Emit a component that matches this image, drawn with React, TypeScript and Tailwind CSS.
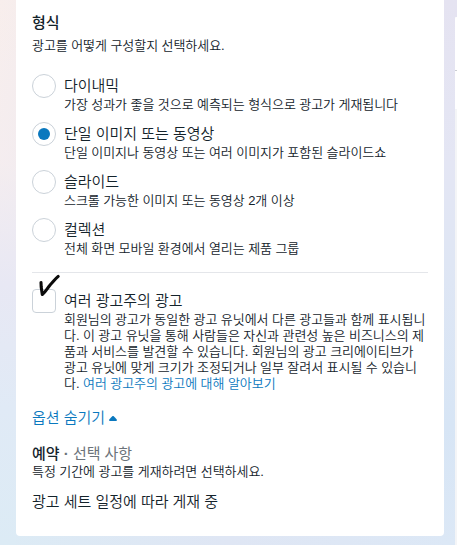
import type { ReactNode } from 'react';

const small = 'text-[13px] leading-4 tracking-[-0.05px] [word-spacing:-0.08px]';
const large = 'text-[15px] leading-5 tracking-[-0.05px] [word-spacing:0.1px]';

function Line({ children }: { children: ReactNode }) {
  return <span className="block whitespace-nowrap">{children}</span>;
}

interface Format {
  title: string;
  detail: string;
  selected?: boolean;
}

const formats: Format[] = [
  { title: '다이내믹', detail: '가장 성과가 좋을 것으로 예측되는 형식으로 광고가 게재됩니다' },
  { title: '단일 이미지 또는 동영상', detail: '단일 이미지나 동영상 또는 여러 이미지가 포함된 슬라이드쇼', selected: true },
  { title: '슬라이드', detail: '스크롤 가능한 이미지 또는 동영상 2개 이상' },
  { title: '컬렉션', detail: '전체 화면 모바일 환경에서 열리는 제품 그룹' },
];

function FormatOption({ title, detail, selected }: Format) {
  return (
    <label className="flex h-12 gap-2">
      <span className="flex size-6 shrink-0 items-center justify-center rounded-full border border-[#cbd2d9] bg-white">
        {selected && <span className="size-3 rounded-full bg-[#0a78be]" />}
      </span>
      <span className="block pt-0.5">
        <span className={`block whitespace-nowrap ${large}`}>{title}</span>
        <span className={`block whitespace-nowrap pt-px ${small}`}>{detail}</span>
      </span>
    </label>
  );
}

export default function App() {
  return (
    <div className="flex h-[545px] w-[457px] overflow-hidden bg-[linear-gradient(90deg,#dcebf5_0%,#dfe6f4_50%,#dce8f6_100%)] font-['Liberation_Sans','Noto_Sans_CJK_KR',sans-serif] font-[350] text-[#14232b]">
      <div className="w-4 shrink-0 bg-[linear-gradient(100deg,#f8eeec_0%,#efeaf1_100%)]">
        <div className="h-full bg-[linear-gradient(180deg,transparent_0%,#f3edf180_30%,#e8e8f4_52%,#e0eaf6_75%,#dcebf5_100%)]" />
      </div>
      <main className="h-[536px] w-[428px] shrink-0 rounded-b-[4px] bg-white px-4 pt-[13px]">
        <section>
          <h2 className={`font-medium ${large}`}>형식</h2>
          <p className={`mt-[5px] ${small}`}>광고를 어떻게 구성할지 선택하세요.</p>
          <div className="mt-5">
            {formats.map((format) => (
              <FormatOption key={format.title} {...format} />
            ))}
          </div>
        </section>

        <section className="mt-1.5 flex gap-2 border-t border-[#e4e6ea] pt-4">
          <span className="relative size-6 shrink-0 rounded-[4px] border border-[#cbd2d9]">
            <svg className="absolute -top-[17px] left-1.5 h-[26px] w-[24px]" viewBox="0 0 24 26" fill="none" stroke="#0b0b0b" strokeWidth="3.1" strokeLinecap="round" strokeLinejoin="round">
              <path d="M2 9.5L2.2 14L3.3 21.5C6.5 19 8 15.5 11.5 11.5C14 9 16 6 19.2 3.4" />
            </svg>
          </span>
          <div className="pt-0.5">
            <h3 className={large}>여러 광고주의 광고</h3>
            <p className={`pt-px ${small}`}>
              <Line>회원님의 광고가 동일한 광고 유닛에서 다른 광고들과 함께 표시됩니</Line>
              <Line>다. 이 광고 유닛을 통해 사람들은 자신과 관련성 높은 비즈니스의 제</Line>
              <Line>품과 서비스를 발견할 수 있습니다. 회원님의 광고 크리에이티브가</Line>
              <Line>광고 유닛에 맞게 크기가 조정되거나 일부 잘려서 표시될 수 있습니</Line>
              <Line>다. <a className="text-[#0a78be]">여러 광고주의 광고에 대해 알아보기</a></Line>
            </p>
          </div>
        </section>

        <button className={`mt-4 flex items-center gap-1 text-[#0a78be] ${large}`}>
          옵션 숨기기
          <svg className="h-[5px] w-2" viewBox="0 0 8 5" fill="currentColor">
            <path d="M4 0C4.5 0 5 .5 7.5 3.2C8.3 4.1 8 5 7 5H1C0 5-.3 4.1.5 3.2C3 .5 3.5 0 4 0Z" />
          </svg>
        </button>

        <section className="mt-4">
          <h2 className={large}>
            <span className="font-medium">예약</span>
            <span className="font-normal text-[#6b737a]"> <b>·</b> 선택 사항</span>
          </h2>
          <p className={small}>특정 기간에 광고를 게재하려면 선택하세요.</p>
          <p className={`mt-3 ${large}`}>광고 세트 일정에 따라 게재 중</p>
        </section>
      </main>
      <div className="w-[11px] shrink-0 bg-[linear-gradient(180deg,#e5e3f1_0%,#e4e6f4_30%,#dfe6f4_48%,#d7e5f5_78%,#dce8f6_100%)]" />
      <aside className="w-0.5 shrink-0 bg-[#f4f5f7]">
        <div className="h-[17px] bg-[#e5e3f1]" />
        <div className="h-[54px] rounded-tl-[2px] border-b border-[#cbcdd2] bg-white" />
        <div className="h-[38px] bg-white" />
      </aside>
    </div>
  );
}
